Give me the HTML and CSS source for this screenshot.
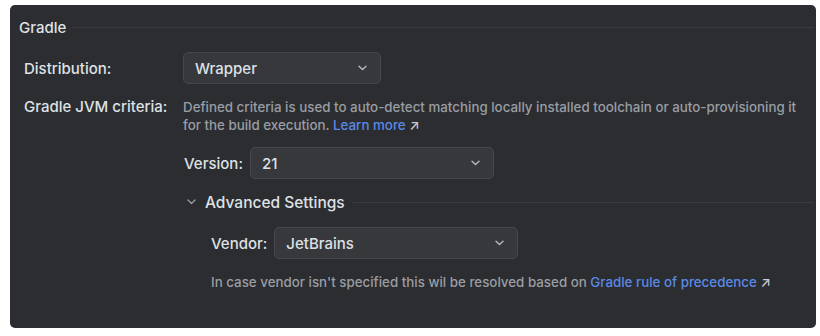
FILE: index.html
```html
<!DOCTYPE html>
<html lang="en">
<head>
    <meta charset="UTF-8">
    <title>Gradle Settings</title>
    <link rel="stylesheet" href="styles.css">
</head>
<body>
    <div class="panel">
        <div class="group-title">
            <span>Gradle</span>
            <div class="rule"></div>
        </div>

        <div class="row row-dist">
            <div class="label">Distribution:</div>
            <div class="combo combo-dist">
                <span>Wrapper</span>
                <svg class="chevron" width="9" height="6" viewBox="0 0 9 6"><path d="M1 1.2l3.5 3.3L8 1.2" fill="none" stroke="#b4b8bf" stroke-width="1.4" stroke-linecap="round" stroke-linejoin="round"/></svg>
            </div>
        </div>

        <div class="row row-jvm">
            <div class="label">Gradle JVM criteria:</div>
            <div class="hint">
                Defined criteria is used to auto-detect matching locally installed toolchain or auto-provisioning it<br>
                for the build execution. <a class="link" href="#">Learn more <span class="arrow">↗</span></a>
            </div>
        </div>

        <div class="sub">
            <div class="field">
                <div class="label">Version:</div>
                <div class="combo combo-ver">
                    <span>21</span>
                    <svg class="chevron" width="9" height="6" viewBox="0 0 9 6"><path d="M1 1.2l3.5 3.3L8 1.2" fill="none" stroke="#b4b8bf" stroke-width="1.4" stroke-linecap="round" stroke-linejoin="round"/></svg>
                </div>
            </div>

            <div class="advanced">
                <svg class="toggle" width="9" height="6" viewBox="0 0 9 6"><path d="M1 1l3.5 3.5L8 1" fill="none" stroke="#9da0a8" stroke-width="1.2" stroke-linecap="round" stroke-linejoin="round"/></svg>
                <span>Advanced Settings</span>
                <div class="rule"></div>
            </div>

            <div class="adv-body">
                <div class="field">
                    <div class="label">Vendor:</div>
                    <div class="combo combo-vendor">
                        <span>JetBrains</span>
                        <svg class="chevron" width="9" height="6" viewBox="0 0 9 6"><path d="M1 1.2l3.5 3.3L8 1.2" fill="none" stroke="#b4b8bf" stroke-width="1.4" stroke-linecap="round" stroke-linejoin="round"/></svg>
                    </div>
                </div>
                <div class="hint note">
                    In case vendor isn't specified this wil be resolved based on <a class="link" href="#">Gradle rule of precedence <span class="arrow">↗</span></a>
                </div>
            </div>
        </div>
    </div>
</body>
</html>
```

FILE: styles.css
```css
/* Page */
body {
    margin: 0;
    background-color: #ffffff;
    font-family: Inter, "Noto Sans", sans-serif;
    font-weight: 500;
    color: #dfe1e5;
}

.panel {
    box-sizing: border-box;
    margin: 5px 0 0 10px;
    width: 806px;
    height: 323px;
    padding: 12px 2px 0 9px;
    background-color: #2b2d30;
    border-radius: 5px;
}

/* Group title with separator */
.group-title {
    display: flex;
    align-items: center;
    gap: 6px;
    font-size: 15px;
    height: 20px;
}

.rule {
    flex: 1;
    height: 1px;
    background-color: #393b40;
}

.label {
    font-size: 15px;
    color: #dfe1e5;
    white-space: nowrap;
}

/* Rows */
.row {
    display: flex;
    padding-left: 5px;
}

.row > .label {
    width: 159px;
    flex-shrink: 0;
}

.row-dist {
    align-items: center;
    margin-top: 15px;
}

.row-jvm {
    margin-top: 14px;
}

.row-jvm > .label {
    line-height: 18px;
}

/* Combo boxes */
.combo {
    box-sizing: border-box;
    display: flex;
    align-items: center;
    justify-content: space-between;
    height: 32px;
    padding: 0 13px 0 11px;
    background-color: #36383c;
    border: 1px solid #45474c;
    border-radius: 5px;
    font-size: 15px;
    color: #dfe1e5;
}

.combo-dist {
    width: 198px;
}

.combo-ver,
.combo-vendor {
    width: 244px;
}

/* Hint texts */
.hint {
    font-size: 13.35px;
    line-height: 18px;
    color: #9a9da4;
    white-space: nowrap;
}

.link {
    color: #5a8ae6;
    text-decoration: none;
}

.arrow {
    color: #c8cbd0;
}

/* Sub section */
.sub {
    padding-left: 165px;
    margin-top: 13px;
}

.field {
    display: flex;
    align-items: center;
    gap: 7px;
}

.advanced {
    display: flex;
    align-items: center;
    margin-top: 10px;
    height: 26px;
    font-size: 15.5px;
    padding-left: 3px;
}

.advanced .toggle {
    margin-right: 9px;
}

.advanced .rule {
    margin-left: 8px;
}

.adv-body {
    padding-left: 27px;
    margin-top: 12px;
}

.note {
    margin-top: 14px;
}
```
